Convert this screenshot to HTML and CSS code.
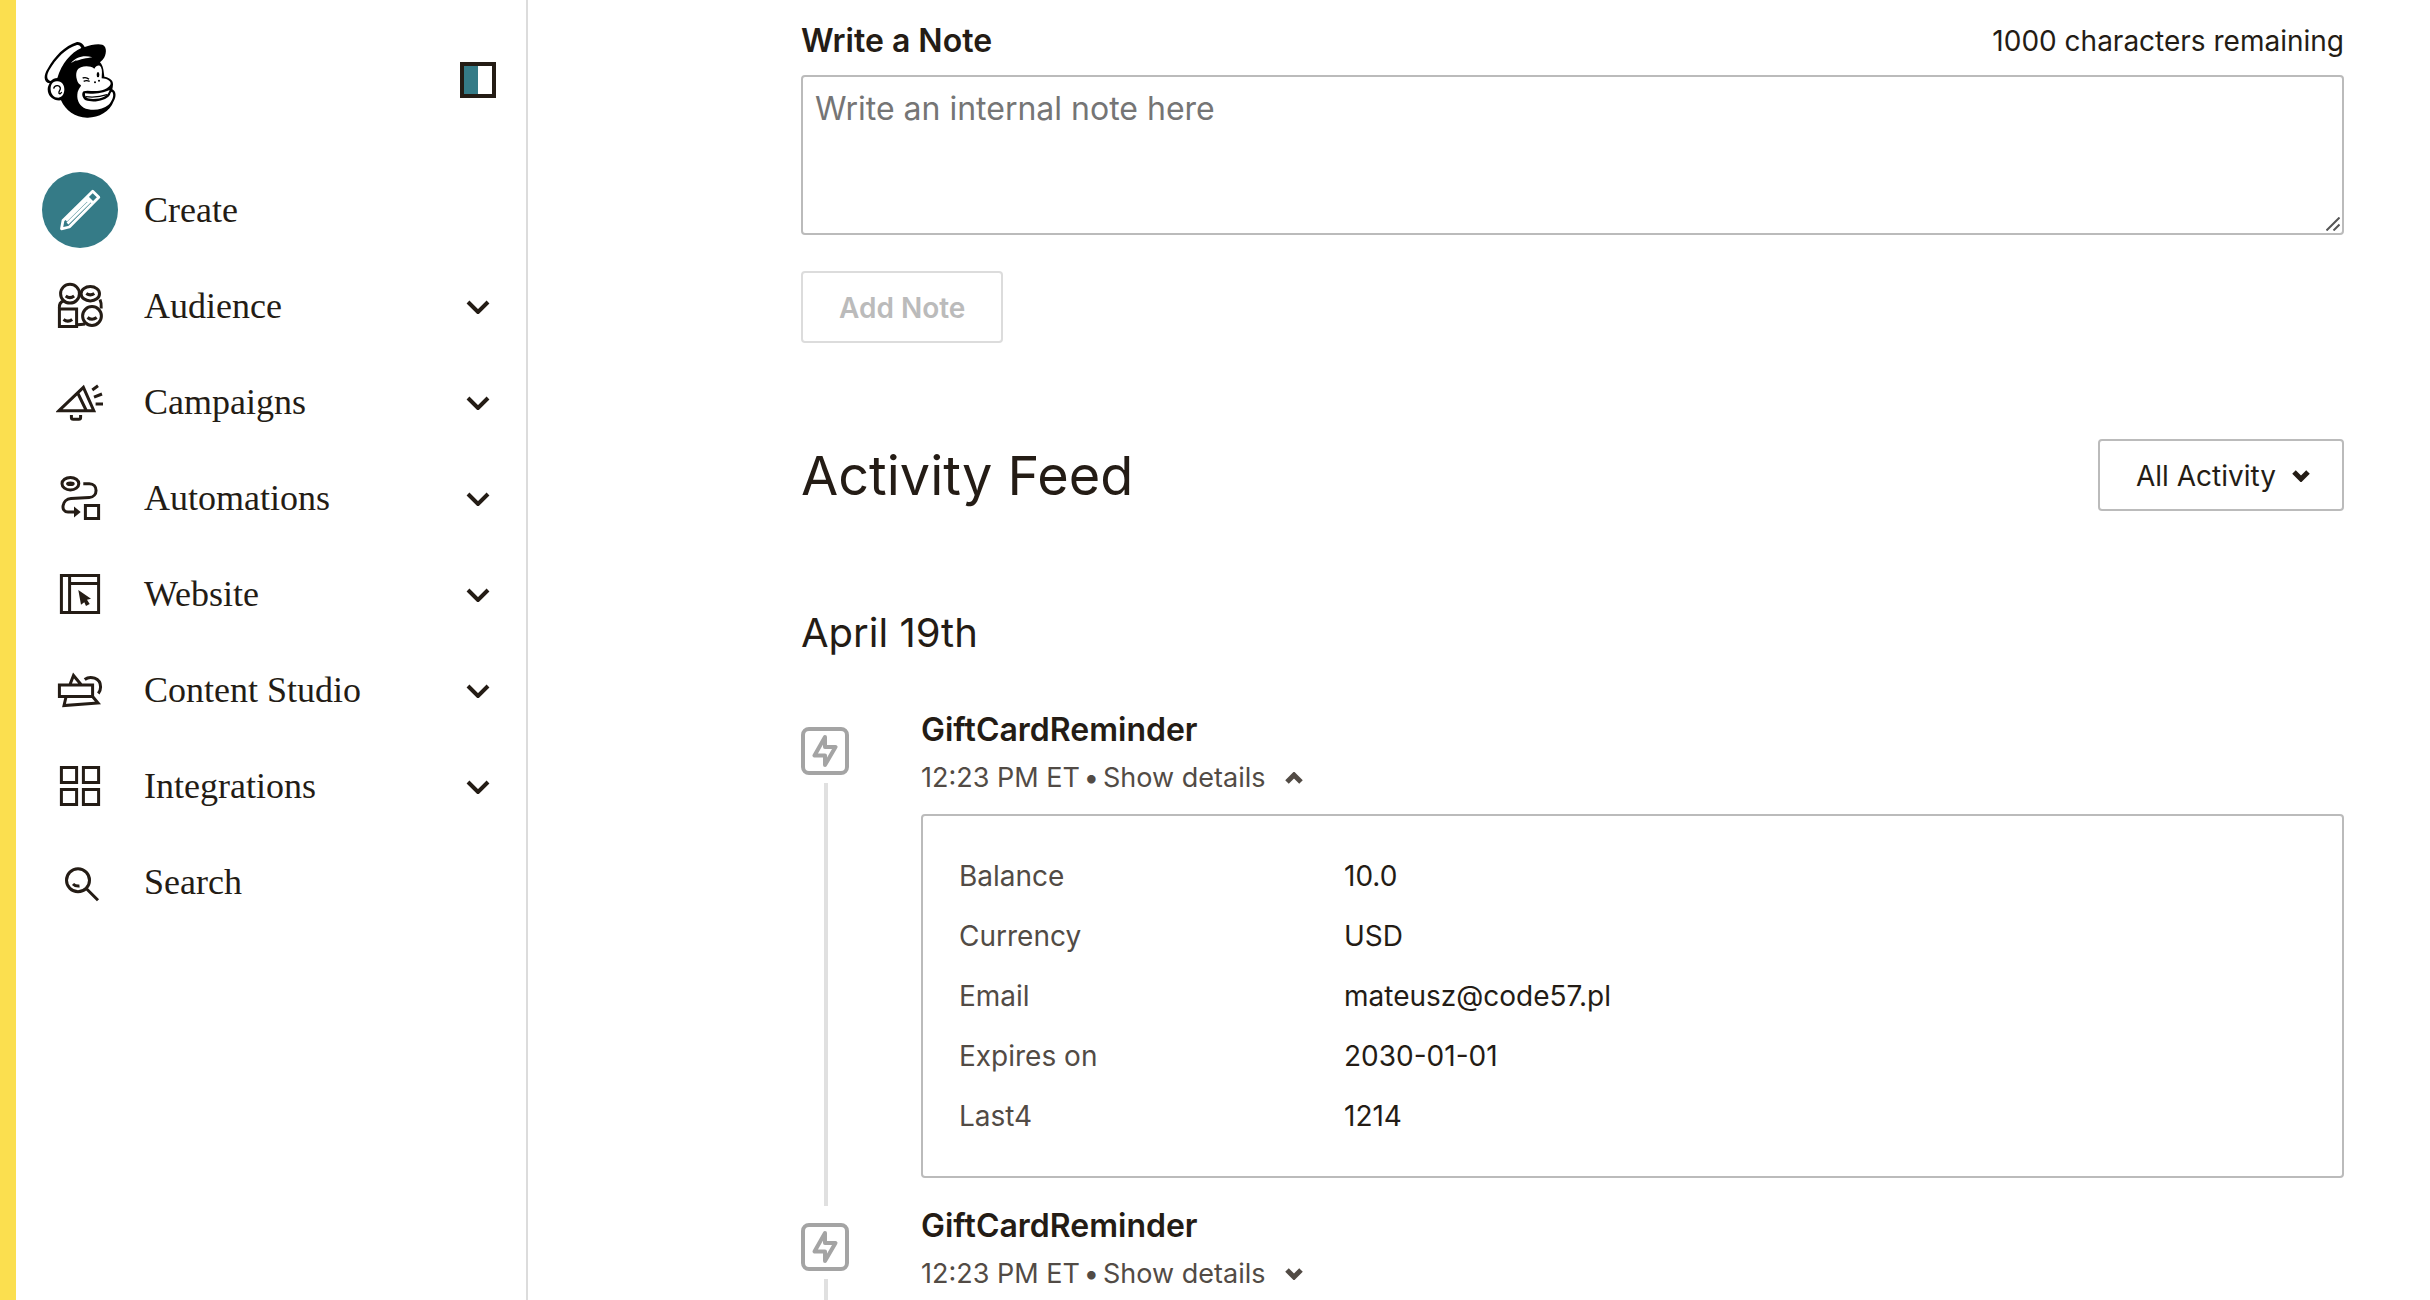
FILE: index.html
```
<!DOCTYPE html>
<html lang="en">
<head>
<meta charset="utf-8">
<title>Contact activity</title>
<link rel="stylesheet" href="styles.css">
</head>
<body>
<div class="app">
  <aside class="sidebar">
    <div class="brand">
      <a class="logo" href="#" aria-label="Home">
        <svg viewBox="130 60 222 240" width="74" height="80" aria-hidden="true">
          <path d="M150 190 C130 186 132 164 144 146 C162 112 196 76 232 66 C244 65 250 72 255 81 C272 74 296 70 308 74 C324 80 320 106 310 118 C306 124 300 126 302 128 C310 136 312 150 314 170 C326 172 340 178 340 192 C340 200 338 206 338 208 C350 214 350 230 342 244 C330 276 296 294 262 293 C226 292 198 272 184 241 C166 244 144 232 144 208 C144 200 147 195 150 190Z"/>
          <path class="w" d="M153 183 C140 180 140 166 149 150 C168 117 200 83 232 75 C238 74 242 77 245 84 C214 98 186 130 173 174 C165 174 159 177 153 183Z"/>
          <path class="w" d="M214 129 C228 112 252 104 278 112 C262 114 240 118 228 124 L232 119Z"/>
          <path class="w" d="M174 184 C159 182 152 194 153 209 C154 223 163 233 176 233 C188 232 194 221 194 208 C194 195 187 185 174 184Z"/>
          <path class="w" d="M232 180 C226 160 232 146 244 142 C256 137 274 138 284 146 C290 136 300 133 304 142 C309 152 306 164 306 175 C322 176 333 183 333 190 C333 202 312 212 292 213 C276 214 262 210 252 214 C244 219 248 236 258 241 C280 248 318 244 331 224 C334 216 337 213 339 218 C344 227 337 244 326 255 C308 271 272 273 252 263 C236 253 230 236 234 216 C237 206 244 200 244 196 C238 192 234 188 232 180Z"/>
          <path class="w" d="M256 220 C276 224 312 219 330 210 C326 228 306 237 280 237 C262 237 255 232 256 220Z"/>
          <path class="l" d="M162 206 C164 194 180 194 182 204 C183 212 176 212 178 220 Q182 224 186 216 M249 174 Q260 170 268 178 M252 184 Q260 180 270 184 M258 230 Q292 234 322 224"/>
          <ellipse cx="295" cy="164" rx="4" ry="8"/><circle cx="286" cy="187" r="3"/><circle cx="298" cy="182" r="3"/>
        </svg>
      </a>
      <button class="toggle" type="button" aria-label="Collapse menu"></button>
    </div>
    <nav aria-label="Main">
      <ul class="nav">
        <li><a href="#"><span class="create"><svg viewBox="0 0 76 76" width="76" height="76" aria-hidden="true"><path d="M19.500 56.800 21 48.500 50.700 19.200 56.800 25.300 27.300 55z M44.800 24.800 51.300 31.300 M25.500 51.500 47.300 30 45 27.700 24 48.500"/></svg></span><span class="name">Create</span></a></li>
        <li><a href="#"><svg class="icon" viewBox="0 0 48 48" aria-hidden="true"><circle cx="14" cy="11.7" r="9.4"/><ellipse cx="34.3" cy="11.7" rx="9.2" ry="7.2"/><path d="M3.4 27.1h17.2v17.4H3.4z"/><circle cx="36" cy="34" r="9.4"/><path d="M3.4 26c-.3-3.500 1-6 4-7M44 17.500q1.600 3.500 1.200 9M21 42.800q4 0 8-.8"/><path d="M9.700 14q4.300 3.200 8.400 0M30.300 11.500q4 2.800 8 0M7.500 37.500q4.300 3.200 8.700 0M31.500 35.500q4.500 3.600 9.200 0"/></svg><span class="name">Audience</span><svg class="chev" viewBox="0 0 24 16" aria-hidden="true"><path d="M2 4l10 10 10-10"/></svg></a></li>
        <li><a href="#"><svg class="icon" viewBox="0 0 48 48" aria-hidden="true"><path d="M3 32.700 27.400 9.300 37.800 32.700z M21.500 14.500 30 32"/><path d="M36.300 12 42 7.800M38 19.200 46 16M39.600 26H47M15.400 37v2.500q0 1.800 1.800 1.800h5.600q1.800 0 1.800-1.800V37"/></svg><span class="name">Campaigns</span><svg class="chev" viewBox="0 0 24 16" aria-hidden="true"><path d="M2 4l10 10 10-10"/></svg></a></li>
        <li><a href="#"><svg class="icon" viewBox="0 0 48 48" aria-hidden="true"><ellipse cx="14.400" cy="9.700" rx="8.400" ry="6.200"/><ellipse class="f" cx="14.400" cy="9.700" rx="4.300" ry="2.300"/><path d="M27.300 9.700h6c9 0 9 13.300 0 13.800L15 24.500c-9 .5-11 13.500-3 13.500h7M29.400 31.400h13.200v13.200H29.400z"/><path class="f" d="M18 32.500 24.700 38 18 43.500z"/></svg><span class="name">Automations</span><svg class="chev" viewBox="0 0 24 16" aria-hidden="true"><path d="M2 4l10 10 10-10"/></svg></a></li>
        <li><a href="#"><svg class="icon" viewBox="0 0 48 48" aria-hidden="true"><path d="M5.400 5.400h37.200v37.200H5.400zM13.600 5v38M13.600 13.400H43"/><path class="f" d="M22.300 20 35 28.700 31 29.700 33.700 34 30 36 28.300 32.300 25 34.700z"/></svg><span class="name">Website</span><svg class="chev" viewBox="0 0 24 16" aria-hidden="true"><path d="M2 4l10 10 10-10"/></svg></a></li>
        <li><a href="#"><svg class="icon" viewBox="0 0 48 48" aria-hidden="true"><path d="M3.400 19.100h33.200v11.500H3.400zM14 18.500 17.500 9.500 25 18.500M10 31 8 39.500 42 37 37 31M28.700 13.500C34 9.500 44.600 11.500 44.600 21c0 2.500-.8 4.500-2.300 6.500"/></svg><span class="name">Content Studio</span><svg class="chev" viewBox="0 0 24 16" aria-hidden="true"><path d="M2 4l10 10 10-10"/></svg></a></li>
        <li><a href="#"><svg class="icon" viewBox="0 0 48 48" aria-hidden="true"><path d="M5.400 5.400h15.200v15.200H5.400zM27.400 5.400h15.200v15.200H27.400zM5.400 27.400h15.200v15.200H5.400zM27.400 27.400h15.200v15.200H27.400z"/></svg><span class="name">Integrations</span><svg class="chev" viewBox="0 0 24 16" aria-hidden="true"><path d="M2 4l10 10 10-10"/></svg></a></li>
        <li><a href="#"><svg class="icon" viewBox="0 0 48 48" aria-hidden="true"><circle cx="22" cy="22.300" r="11.500"/><path d="M30.500 30.800 42 42.300M17 26q2.500 2.500 6.500 2"/></svg><span class="name">Search</span></a></li>
      </ul>
    </nav>
  </aside>

  <main class="main">
    <form class="note">
      <div class="note-head">
        <label for="note">Write a Note</label>
        <span class="count">1000 characters remaining</span>
      </div>
      <div class="field">
        <textarea id="note" placeholder="Write an internal note here"></textarea>
        <svg class="grip" viewBox="0 0 14 14" aria-hidden="true"><path d="M.5 13.500 13.500.5M7.500 13.500l6-6"/></svg>
      </div>
      <button class="add" type="button" disabled>Add Note</button>
    </form>

    <section>
      <div class="feed-head">
        <h1>Activity Feed</h1>
        <div class="filter">
          <select aria-label="Filter activity"><option>All Activity</option></select>
          <svg class="mini" viewBox="0 0 18 12" aria-hidden="true"><path d="M2 2l7 7 7-7"/></svg>
        </div>
      </div>
      <h2>April 19th</h2>
      <ol class="feed">
        <li class="event">
          <div class="rail">
            <svg viewBox="0 0 48 48" width="48" height="48" aria-hidden="true"><rect x="2" y="2" width="44" height="44" rx="6"/><path d="M24 10 13.500 28.500H24V38L34.500 20H24z"/></svg>
            <span class="line"></span>
          </div>
          <div class="body">
            <h3>GiftCardReminder</h3>
            <p class="meta"><span>12:23 PM ET</span><span>•</span><button type="button" aria-expanded="true">Show details<svg class="mini" viewBox="0 0 18 12" aria-hidden="true"><path d="M2 10l7-7 7 7"/></svg></button></p>
            <table class="details">
              <tbody>
                <tr><th scope="row">Balance</th><td>10.0</td></tr>
                <tr><th scope="row">Currency</th><td>USD</td></tr>
                <tr><th scope="row">Email</th><td>mateusz@code57.pl</td></tr>
                <tr><th scope="row">Expires on</th><td>2030-01-01</td></tr>
                <tr><th scope="row">Last4</th><td>1214</td></tr>
              </tbody>
            </table>
          </div>
        </li>
        <li class="event">
          <div class="rail">
            <svg viewBox="0 0 48 48" width="48" height="48" aria-hidden="true"><rect x="2" y="2" width="44" height="44" rx="6"/><path d="M24 10 13.500 28.500H24V38L34.500 20H24z"/></svg>
            <span class="line"></span>
          </div>
          <div class="body">
            <h3>GiftCardReminder</h3>
            <p class="meta"><span>12:23 PM ET</span><span>•</span><button type="button" aria-expanded="false">Show details<svg class="mini" viewBox="0 0 18 12" aria-hidden="true"><path d="M2 2l7 7 7-7"/></svg></button></p>
          </div>
        </li>
      </ol>
    </section>
  </main>
</div>
</body>
</html>
```
FILE: styles.css
```
* { box-sizing: border-box; }

body {
  margin: 0;
  background: #fff;
  color: #241c15;
  font: 28px/40px Inter, "Liberation Sans", sans-serif;
}

h1, h2, h3, p, ul, ol { margin: 0; padding: 0; }
ul, ol { list-style: none; }

button, select, textarea { font: inherit; color: inherit; }

.app {
  display: flex;
  height: 100vh;
  overflow: hidden;
}

.sidebar {
  flex: none;
  width: 528px;
  border-left: 16px solid #fbdf4f;
  border-right: 2px solid #dcdcdc;
}

.brand {
  display: flex;
  justify-content: space-between;
  align-items: center;
  height: 162px;
  padding: 0 30px 2px 27px;
}

.logo { display: block; height: 80px; }
.logo .w { fill: #fff; }
.logo .l { fill: none; stroke: #000; stroke-width: 4; }

.toggle {
  width: 36px;
  height: 36px;
  padding: 0;
  border: 4px solid #241c15;
  background: linear-gradient(90deg, #357b87 50%, #fff 50%);
}

.nav a {
  display: flex;
  align-items: center;
  height: 96px;
  padding: 0 36px 0 40px;
  color: inherit;
  font: 36px/48px "Liberation Serif", serif;
  text-decoration: none;
}

.icon {
  width: 48px;
  height: 48px;
  fill: none;
  stroke: #241c15;
  stroke-width: 3;
}

.icon .f { fill: #241c15; stroke: none; }

.create {
  width: 76px;
  height: 76px;
  margin: 0 -14px;
  border-radius: 50%;
  background: #357b87;
}

.create svg { display: block; fill: none; stroke: #fff; stroke-width: 2.8; stroke-linejoin: round; }

.name { flex: 1; margin-left: 40px; }

.chev { width: 24px; height: 16px; fill: none; stroke: #241c15; stroke-width: 4; }

.main {
  flex: 1;
  padding: 21px 86px 0 273px;
}

.note { display: flex; flex-direction: column; align-items: flex-start; }

.note-head {
  display: flex;
  justify-content: space-between;
  width: 100%;
  margin-bottom: 14px;
}

.note-head label, h3 { font-size: 32px; font-weight: 600; }

.field { position: relative; width: 100%; }

textarea {
  display: block;
  width: 100%;
  height: 160px;
  padding: 12px;
  border: 2px solid #bbb;
  border-radius: 4px;
  background: #fff;
  font-size: 32px;
}

textarea::placeholder { color: #757575; }
textarea::-webkit-resizer { display: none; }

.grip {
  position: absolute;
  right: 4px;
  bottom: 4px;
  width: 14px;
  height: 14px;
  fill: none;
  stroke: #555;
  stroke-width: 2;
  pointer-events: none;
}

.add {
  height: 72px;
  margin-top: 36px;
  padding: 2px 36px 0;
  border: 2px solid #dcdcdc;
  border-radius: 4px;
  background: #fff;
  color: #bbb;
  font-weight: 600;
}

.feed-head {
  display: flex;
  justify-content: space-between;
  align-items: center;
  margin-top: 96px;
}

h1 { padding-top: 2px; font-size: 54px; line-height: 70px; font-weight: 400; }
h2 { margin: 98px 0 53px; font-size: 40px; line-height: 48px; font-weight: 400; }

.filter { position: relative; }

.filter select {
  display: block;
  width: 246px;
  height: 72px;
  padding: 2px 36px 0;
  border: 2px solid #bbb;
  border-radius: 4px;
  background: #fff;
  appearance: none;
}

.filter .mini { position: absolute; right: 34px; top: 31px; }

.mini { width: 18px; height: 12px; fill: none; stroke: currentColor; stroke-width: 5; }

.event { display: flex; gap: 72px; }

.rail { display: flex; flex-direction: column; align-items: center; padding-top: 17px; }
.rail svg { fill: none; stroke: #a4a4a4; stroke-width: 4; stroke-linejoin: round; }
.line { flex: 1; width: 4px; min-height: 40px; margin: 8px 0 0 2px; background: #e0e0e0; }

.body { flex: 1; padding-bottom: 28px; }

h3 { line-height: 40px; }
.meta { display: flex; gap: 4px; margin: 8px 0 16px; color: #524b45; font-size: 27px; line-height: 40px; }
.meta button { display: flex; align-items: center; gap: 20px; padding: 0; border: 0; background: none; }

.details {
  width: 100%;
  padding: 30px 36px;
  border: 2px solid #bbb;
  border-radius: 4px;
  border-spacing: 0;
}

.details th, .details td { height: 60px; padding: 0; text-align: left; font-weight: 400; }
.details th { width: 385px; color: #524b45; }
```
